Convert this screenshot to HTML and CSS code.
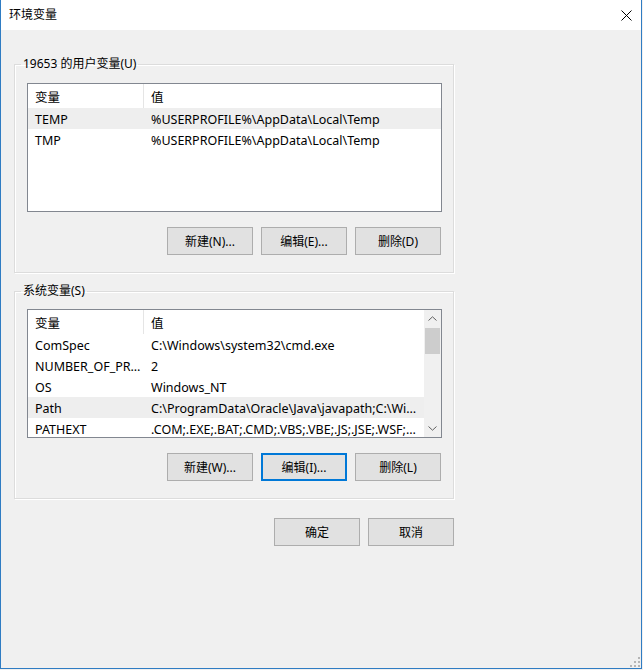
FILE: index.html
```html
<!DOCTYPE html>
<html lang="zh-CN">
<head>
    <meta charset="UTF-8">
    <title>环境变量</title>
    <link rel="stylesheet" href="styles.css">
</head>
<body>
    <div class="window">
        <div class="titlebar">
            <span class="title">环境变量</span>
            <svg class="close" width="11" height="11" viewBox="0 0 11 11">
                <path d="M0.5 0.5 L10.5 10.5 M10.5 0.5 L0.5 10.5" stroke="#000" stroke-width="1" fill="none"/>
            </svg>
        </div>

        <div class="content">
            <fieldset class="group">
                <legend>19653 的用户变量(U)</legend>
                <div class="list">
                    <div class="list-body">
                        <div class="row head">
                            <div class="cell name">变量</div>
                            <div class="cell value">值</div>
                        </div>
                        <div class="row selected">
                            <div class="cell name">TEMP</div>
                            <div class="cell value">%USERPROFILE%\AppData\Local\Temp</div>
                        </div>
                        <div class="row">
                            <div class="cell name">TMP</div>
                            <div class="cell value">%USERPROFILE%\AppData\Local\Temp</div>
                        </div>
                    </div>
                </div>
                <div class="buttons">
                    <button class="btn">新建(N)...</button>
                    <button class="btn">编辑(E)...</button>
                    <button class="btn">删除(D)</button>
                </div>
            </fieldset>

            <fieldset class="group system">
                <legend>系统变量(S)</legend>
                <div class="list">
                    <div class="list-body">
                        <div class="row head">
                            <div class="cell name">变量</div>
                            <div class="cell value">值</div>
                        </div>
                        <div class="row">
                            <div class="cell name">ComSpec</div>
                            <div class="cell value">C:\Windows\system32\cmd.exe</div>
                        </div>
                        <div class="row">
                            <div class="cell name">NUMBER_OF_PROCESSORS</div>
                            <div class="cell value">2</div>
                        </div>
                        <div class="row">
                            <div class="cell name">OS</div>
                            <div class="cell value">Windows_NT</div>
                        </div>
                        <div class="row selected">
                            <div class="cell name">Path</div>
                            <div class="cell value">C:\ProgramData\Oracle\Java\javapath;C:\Windows\system32;C:\Windows</div>
                        </div>
                        <div class="row">
                            <div class="cell name">PATHEXT</div>
                            <div class="cell value">.COM;.EXE;.BAT;.CMD;.VBS;.VBE;.JS;.JSE;.WSF;.WSH;.MSC</div>
                        </div>
                    </div>
                    <div class="scrollbar">
                        <div class="arrow">
                            <svg width="9" height="5" viewBox="0 0 9 5"><path d="M0.5 4.5 L4.5 0.8 L8.5 4.5" stroke="#606060" fill="none"/></svg>
                        </div>
                        <div class="track">
                            <div class="thumb"></div>
                        </div>
                        <div class="arrow">
                            <svg width="9" height="5" viewBox="0 0 9 5"><path d="M0.5 0.5 L4.5 4.2 L8.5 0.5" stroke="#606060" fill="none"/></svg>
                        </div>
                    </div>
                </div>
                <div class="buttons">
                    <button class="btn">新建(W)...</button>
                    <button class="btn focused">编辑(I)...</button>
                    <button class="btn">删除(L)</button>
                </div>
            </fieldset>

            <div class="buttons dialog-buttons">
                <button class="btn">确定</button>
                <button class="btn">取消</button>
            </div>
        </div>

        <svg class="grip" width="10" height="10" viewBox="0 0 10 10">
            <rect x="8" y="0" width="2" height="2" fill="#b5b5b5"/>
            <rect x="4" y="4" width="2" height="2" fill="#b5b5b5"/>
            <rect x="8" y="4" width="2" height="2" fill="#b5b5b5"/>
            <rect x="0" y="8" width="2" height="2" fill="#b5b5b5"/>
            <rect x="4" y="8" width="2" height="2" fill="#b5b5b5"/>
            <rect x="8" y="8" width="2" height="2" fill="#b5b5b5"/>
        </svg>
    </div>
</body>
</html>
```

FILE: styles.css
```css
body {
    margin: 0;
    background-color: #f0f0f0;
    font-family: "Noto Sans", "Noto Sans CJK SC", sans-serif;
    font-size: 12px;
    color: #000;
}

.window {
    position: relative;
    box-sizing: border-box;
    width: 642px;
    height: 669px;
    border: 1px solid #2f7cc3;
    border-top: none;
    background-color: #f0f0f0;
    display: flex;
    flex-direction: column;
}

.titlebar {
    height: 30px;
    flex: none;
    background-color: #fff;
    display: flex;
    align-items: center;
    justify-content: space-between;
    padding: 0 9px 0 8px;
}

.title {
    font-size: 12px;
    line-height: 16px;
}

.close {
    display: block;
}

.content {
    padding: 26px 0 0 13px;
}

.group {
    box-sizing: border-box;
    width: 440px;
    margin: 0;
    padding: 11px 11px 17px 12px;
    border: 1px solid #dcdcdc;
    box-shadow: inset 1px 1px 0 #fff, 1px 1px 0 #fff;
}

.group legend {
    margin-left: -6px;
    padding: 0 2px;
    line-height: 16px;
}

.group.system {
    margin-top: 10px;
    padding-top: 10px;
}

.list {
    height: 129px;
    box-sizing: border-box;
    border: 1px solid #828790;
    background-color: #fff;
    display: flex;
    overflow: hidden;
}

.list-body {
    flex: 1;
    min-width: 0;
}

.row {
    display: grid;
    grid-template-columns: 116px 1fr;
    height: 21px;
    align-items: center;
}

.row.head {
    height: 24px;
    align-items: stretch;
}

.row.head .cell {
    display: flex;
    align-items: center;
}

.row.head .name {
    border-right: 1px solid #e5e5e5;
}

.row.selected {
    background-color: #eeeeee;
}

.cell {
    white-space: nowrap;
    overflow: hidden;
    text-overflow: ellipsis;
    font-size: 12.5px;
    line-height: 16px;
    padding-top: 3px;
}

.cell.name {
    padding-left: 7px;
    padding-right: 2px;
}

.cell.value {
    padding-left: 7px;
    padding-right: 6px;
}

.scrollbar {
    width: 17px;
    flex: none;
    background-color: #f0f0f0;
    display: flex;
    flex-direction: column;
}

.arrow {
    height: 17px;
    display: flex;
    align-items: center;
    justify-content: center;
}

.track {
    flex: 1;
    padding: 1px 1px 0 1px;
}

.thumb {
    height: 26px;
    background-color: #cdcdcd;
}

.buttons {
    display: flex;
    justify-content: flex-end;
    gap: 8px;
    margin-top: 15px;
    padding-right: 1px;
}

.btn {
    box-sizing: border-box;
    width: 86px;
    height: 28px;
    background-color: #e1e1e1;
    border: 1px solid #adadad;
    font-family: "Noto Sans", "Noto Sans CJK SC", sans-serif;
    font-size: 12px;
    color: #000;
    padding: 0;
}

.btn.focused {
    border: 2px solid #0078d7;
}

.dialog-buttons {
    width: 440px;
    margin-top: 19px;
}

.grip {
    position: absolute;
    right: 1px;
    bottom: 1px;
}
```
